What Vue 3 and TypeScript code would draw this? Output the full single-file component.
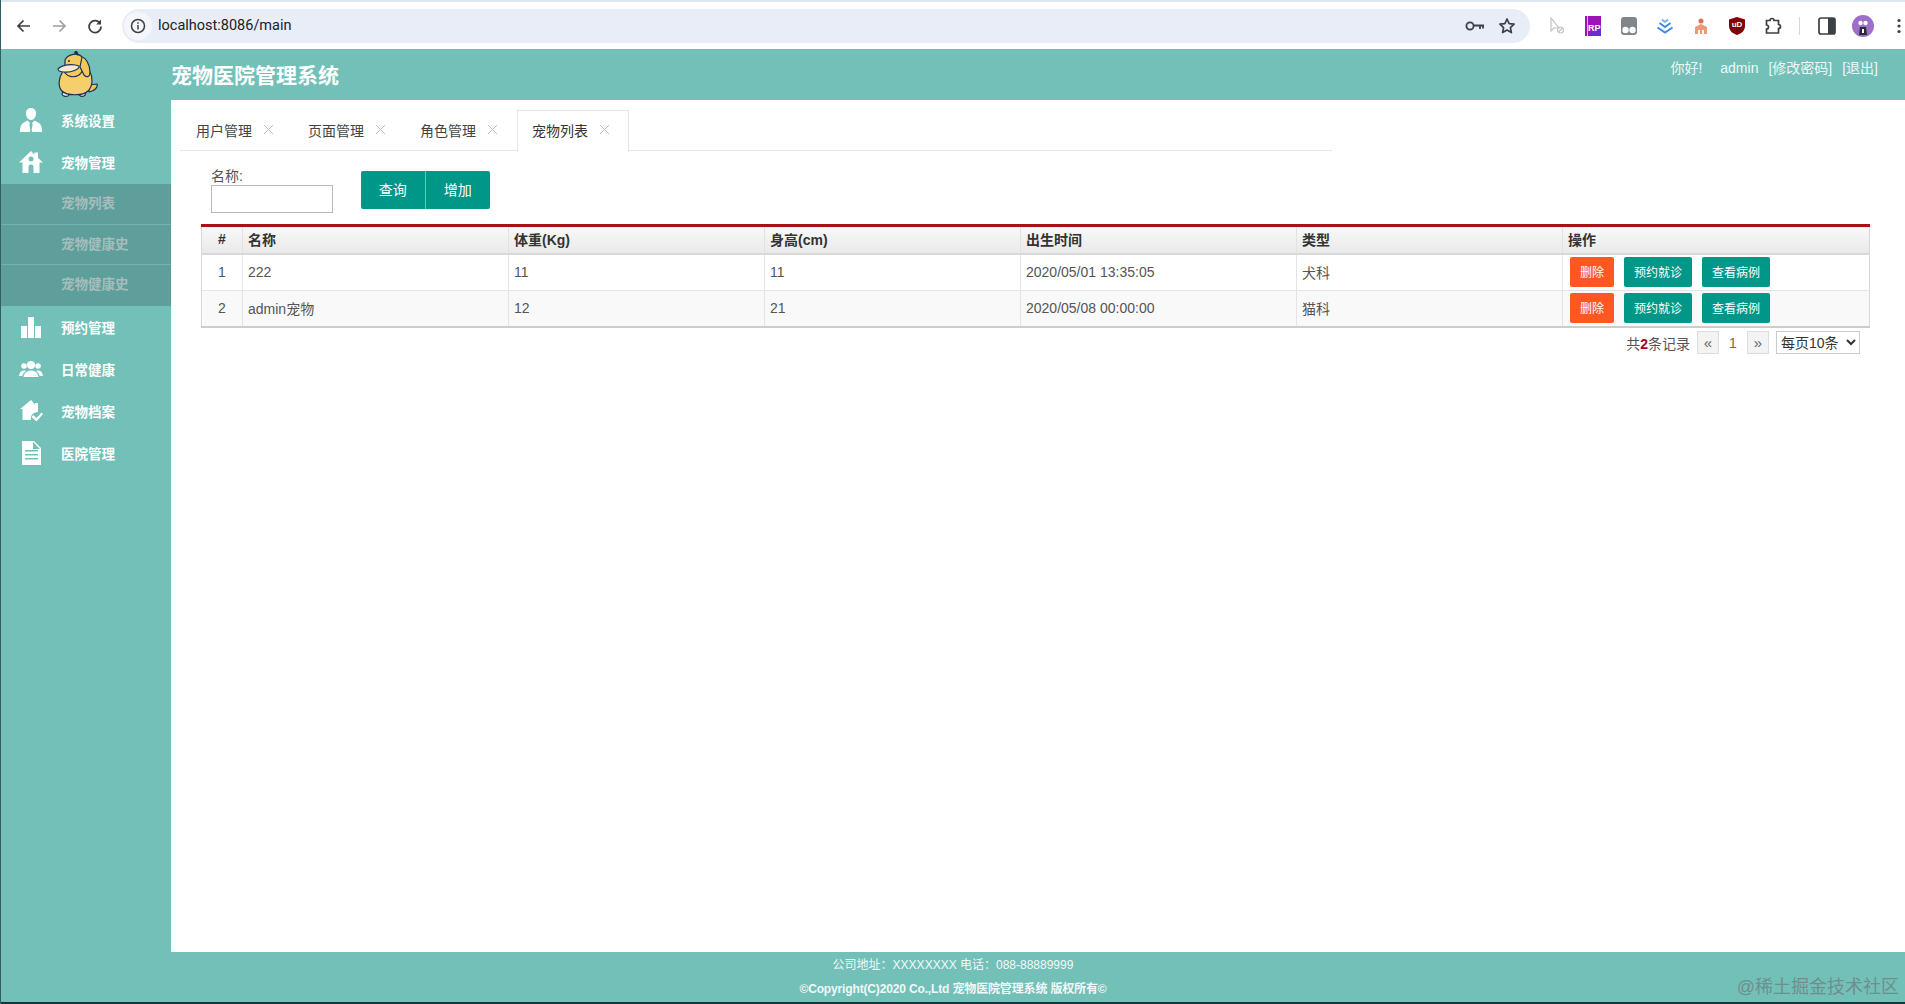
<script setup lang="ts">
interface Pet {
  id: number;
  name: string;
  weight: string;
  height: string;
  born: string;
  kind: string;
}

const tabs = ["用户管理", "页面管理", "角色管理", "宠物列表"];
const subMenu = ["宠物列表", "宠物健康史", "宠物健康史"];
const columns = ["#", "名称", "体重(Kg)", "身高(cm)", "出生时间", "类型", "操作"];
const colWidths = [41, 266, 256, 256, 276, 266, 307];

const pets: Pet[] = [
  { id: 1, name: "222", weight: "11", height: "11", born: "2020/05/01 13:35:05", kind: "犬科" },
  { id: 2, name: "admin宠物", weight: "12", height: "21", born: "2020/05/08 00:00:00", kind: "猫科" },
];
</script>

<template>
  <div class="page">
    <!-- browser chrome -->
    <div class="chrome">
      <span class="slot">
        <svg width="18" height="18" viewBox="0 0 18 18" fill="none" stroke="#3c4043" stroke-width="1.7"><path d="M15 9H3.5M8.5 3.5 3 9l5.5 5.5" /></svg>
      </span>
      <span class="slot tight">
        <svg width="18" height="18" viewBox="0 0 18 18" fill="none" stroke="#9aa0a6" stroke-width="1.7"><path d="M3 9h11.5M9.5 3.5 15 9l-5.5 5.5" /></svg>
      </span>
      <span class="slot">
        <svg width="18" height="18" viewBox="0 0 18 18" fill="none" stroke="#3c4043" stroke-width="1.7"><path d="M14.4 7A6 6 0 1 0 15 9.5" /><path d="M15 2.6V7.4H10.2" fill="#3c4043" stroke="none" /></svg>
      </span>
      <div class="address">
        <span class="site-info">
          <svg width="16" height="16" viewBox="0 0 16 16" fill="none" stroke="#3c4043" stroke-width="1.5"><circle cx="8" cy="8" r="6.5" /><path d="M8 7v4.4M8 4.2v1.6" /></svg>
        </span>
        <span class="url">localhost:8086/main</span>
        <span class="addr-slot">
          <svg width="20" height="12" viewBox="0 0 20 12" fill="none" stroke="#3c4043" stroke-width="1.8"><circle cx="5" cy="6" r="3.6" /><path d="M9 5.5h10M15 5.5v3.5M18 5.5v3" /></svg>
        </span>
        <span class="addr-slot">
          <svg width="18" height="18" viewBox="0 0 18 18" fill="none" stroke="#3c4043" stroke-width="1.7" stroke-linejoin="round"><path d="m9 2 2.1 4.6 5 .6-3.7 3.4 1 5L9 13.1l-4.4 2.5 1-5L1.900 7.200l5-.6z" /></svg>
        </span>
      </div>
      <div class="exts">
        <span class="slot">
          <svg width="16" height="18" viewBox="0 0 16 18" fill="none" stroke="#c4c4c4" stroke-width="1.2"><path d="M2 1v13l3-3h5z" /><circle cx="11.500" cy="13" r="3" /><path d="m9.500 15 4-4" /></svg>
        </span>
        <span class="slot">
          <svg width="16" height="20" viewBox="0 0 16 20"><rect width="16" height="20" fill="#9c14b8" /><rect x="2" width="1" height="20" fill="#e6b3ef" /><path d="M3 20 16 7v13z" fill="#6a2bd0" /></svg>
          <span class="rp">RP</span>
        </span>
        <span class="slot">
          <svg width="16" height="18" viewBox="0 0 16 18"><rect width="16" height="18" rx="3" fill="#80868b" /><circle cx="4.500" cy="13" r="3.200" fill="#fff" /><circle cx="11.500" cy="13" r="3.200" fill="#fff" /></svg>
        </span>
        <span class="slot">
          <svg width="18" height="16" viewBox="0 0 18 16" fill="none" stroke="#3b8be0" stroke-width="2"><path d="m6 1.500 3 2.500 3-2.500" stroke="#7ab6ef" /><path d="m3.500 5 5.500 4 5.500-4" /><path d="m1.500 9.500 7.500 5 7.500-5" /></svg>
        </span>
        <span class="slot">
          <svg width="14" height="16" viewBox="0 0 14 16"><circle cx="7" cy="3" r="2.500" fill="#e2704f" /><path d="M1 16V9l6-3 6 3v7h-3v-4H8v4H6v-4H4v4z" fill="#eb9a78" /></svg>
        </span>
        <span class="slot">
          <svg width="16" height="18" viewBox="0 0 16 18"><path d="M8 0 16 2.500V9c0 4.500-3.500 7.500-8 9-4.500-1.500-8-4.500-8-9V2.500z" fill="#800000" /></svg>
          <span class="ub">uD</span>
        </span>
        <span class="slot">
          <svg width="18" height="18" viewBox="0 0 18 18" fill="none" stroke="#3c4043" stroke-width="1.700"><path d="M2 4h3.500a2 2 0 1 1 4 0H14v4a2 2 0 1 1 0 4v4.500H2v-4a2 2 0 0 0 0-4z" transform="translate(.5 -.5)" /></svg>
        </span>
      </div>
      <span class="divider"></span>
      <span class="slot">
        <svg width="18" height="18" viewBox="0 0 18 18"><rect x="1" y="1" width="16" height="16" rx="2" fill="none" stroke="#3c4043" stroke-width="1.700" /><rect x="10" y="1" width="7" height="16" fill="#3c4043" /></svg>
      </span>
      <span class="slot">
        <svg width="22" height="22" viewBox="0 0 22 22"><circle cx="11" cy="11" r="11" fill="#9c70c9" /><circle cx="8.500" cy="8" r="2.200" fill="#fff" /><circle cx="13.500" cy="8" r="2.200" fill="#fff" /><path d="M8 12h6l1 8H7z" fill="#2b2b33" /><rect x="10" y="14" width="2" height="4" fill="#fff" /></svg>
      </span>
      <span class="slot">
        <svg width="4" height="16" viewBox="0 0 4 16" fill="#3c4043"><circle cx="2" cy="2.500" r="1.600" /><circle cx="2" cy="8" r="1.600" /><circle cx="2" cy="13.500" r="1.600" /></svg>
      </span>
    </div>

    <header class="top">
      <div class="brand">
        <svg class="duck" width="42" height="48" viewBox="0 0 42 48">
          <g stroke="#1d2f5a" stroke-width="1.200" stroke-linejoin="round">
            <path d="M6 44c0-2 3-3 5-2s3 3 1 4-6 0-6-2zM23 44c0-2 3-3 5-2s2 3 0 4-5 0-5-2z" fill="#dfe8f3" />
            <path d="M33 35 41 34c1 3-2 7-8 8z" fill="#f1c35b" />
            <path d="M7 21C2 29 2 37 6 41c5 5 21 5 26 0 5-5 5-14 2-19L26 12z" fill="#f6cf6c" />
            <path d="M9 10C12 4 22 2 26 7c4 5 2 14-3 18-5 3-11 2-14-2z" fill="#f6c95c" />
            <path d="M26 7c4 1 8 8 8 15 0 5-3 6-6 3l-4-8z" fill="#f4c75a" />
            <path d="M19 3c-1-1 1-2 2-1l1 3z" fill="#1d2f5a" />
            <path d="M2 19c4-4 14-6 21-3 1 3-8 7-15 6-3 0-6-1-6-3z" fill="#f6ead2" />
          </g>
          <circle cx="13" cy="11" r="1" fill="#1d2f5a" />
        </svg>
      </div>
      <h1 class="title">宠物医院管理系统</h1>
      <div class="user">
        <span>你好!</span>
        <span>admin</span>
        <span>[修改密码]</span>
        <span>[退出]</span>
      </div>
    </header>

    <div class="body">
      <aside class="side">
        <div class="item">
          <svg class="ico" viewBox="0 0 24 24" fill="#fff"><path d="M12 0c3.300 0 5 2.400 5 5.500S15 12 12 12 7 8.800 7 5.500 8.700 0 12 0z" /><path d="M8.500 12.500 11 15l-.7 1.500 1 5-.3 2.500H1c0-4 .8-7.500 3-9zM15.500 12.500 13 15l.7 1.500-1 5 .3 2.500h10c0-4-.8-7.500-3-9z" /></svg>
          <span>系统设置</span>
        </div>
        <div class="item">
          <svg class="ico" viewBox="0 0 24 24" fill="#fff"><path fill-rule="evenodd" d="M12 1 0 12.500h3.500V23h6v-6a2.500 2.500 0 0 1 5 0v6h6V12.500H24L19 8V2.500h-3.500v2.200zM12 6.500a2.500 2.500 0 1 1 0 5 2.500 2.500 0 0 1 0-5z" /></svg>
          <span>宠物管理</span>
        </div>
        <div class="sub">
          <div v-for="(name, i) in subMenu" :key="i" class="sub-item">{{ name }}</div>
        </div>
        <div class="item">
          <svg class="ico" viewBox="0 0 24 24" fill="#fff"><path d="M2 11h6v12H2zM9 2h6v21H9zM16 11h6v12h-6z" /></svg>
          <span>预约管理</span>
        </div>
        <div class="item">
          <svg class="ico" viewBox="0 0 24 24" fill="#fff"><circle cx="12" cy="8" r="4" /><path d="M4.500 20c.5-4 3.500-6.500 7.500-6.500s7 2.500 7.500 6.500z" /><circle cx="5" cy="9" r="2.800" /><circle cx="19" cy="9" r="2.800" /><path d="M0 19c.3-3.500 2-5.500 5-5.500.8 0 1.400.1 2 .4-2 1.300-3.300 3-3.700 5.100zM24 19c-.3-3.500-2-5.500-5-5.500-.8 0-1.400.1-2 .4 2 1.300 3.300 3 3.700 5.100z" /></svg>
          <span>日常健康</span>
        </div>
        <div class="item">
          <svg class="ico" viewBox="0 0 24 24" fill="#fff"><path d="M12 1 1 10h2.500v11H12c-1-4 2-8 7-8V4h-3v1.500z" /><path d="m12.500 18 2-2 3 3 5-5.500 1.500 1.500-6.500 7.500z" /></svg>
          <span>宠物档案</span>
        </div>
        <div class="item">
          <svg class="ico" viewBox="0 0 24 24" fill="#fff"><path fill-rule="evenodd" d="M3 0h12l7 7v17H3zM6 9v1.500h13V9zM6 13v1.500h13V13zM6 17v1.500h13V17zM14 1v7h7z" /></svg>
          <span>医院管理</span>
        </div>
      </aside>

      <main class="main">
        <div class="tabs">
          <div v-for="(tab, i) in tabs" :key="tab" class="tab" :class="{ active: i === tabs.length - 1 }">
            <span>{{ tab }}</span>
            <svg width="11" height="11" viewBox="0 0 11 11" fill="none" stroke="#bdbdbd"><path d="m1 1 9 9M10 1l-9 9" /></svg>
          </div>
        </div>

        <div class="filter">
          <label class="field">
            <span>名称:</span>
            <input type="text" />
          </label>
          <div class="btn-group">
            <button type="button" class="big-btn">查询</button>
            <button type="button" class="big-btn">增加</button>
          </div>
        </div>

        <table class="grid">
          <colgroup>
            <col v-for="(w, i) in colWidths" :key="i" :style="{ width: w + 'px' }" />
          </colgroup>
          <thead>
            <tr>
              <th v-for="(col, i) in columns" :key="col" :class="{ center: i === 0 }">{{ col }}</th>
            </tr>
          </thead>
          <tbody>
            <tr v-for="pet in pets" :key="pet.id">
              <td class="center">{{ pet.id }}</td>
              <td>{{ pet.name }}</td>
              <td>{{ pet.weight }}</td>
              <td>{{ pet.height }}</td>
              <td>{{ pet.born }}</td>
              <td>{{ pet.kind }}</td>
              <td class="ops">
                <button type="button" class="sm danger">删除</button>
                <button type="button" class="sm">预约就诊</button>
                <button type="button" class="sm">查看病例</button>
              </td>
            </tr>
          </tbody>
        </table>

        <div class="pager">
          <span>共<b>2</b>条记录</span>
          <a class="pg">«</a>
          <span class="cur">1</span>
          <a class="pg">»</a>
          <select>
            <option>每页10条</option>
          </select>
        </div>
      </main>
    </div>

    <footer class="foot">
      <p>公司地址：XXXXXXXX 电话：088-88889999</p>
      <p class="copy">©Copyright(C)2020 Co.,Ltd 宠物医院管理系统 版权所有©</p>
      <span class="mark">@稀土掘金技术社区</span>
    </footer>
    <div class="edge"></div>
  </div>
</template>

<style scoped>
.page {
  height: 1004px;
  width: 1905px;
  display: flex;
  flex-direction: column;
  border-left: 1px solid #2f5f60;
  box-sizing: border-box;
  overflow: hidden;
  background: #fff;
  font-family: "Liberation Sans", "Noto Sans CJK SC", sans-serif;
  color: #555;
}

/* chrome */
.chrome {
  height: 49px;
  flex: none;
  display: flex;
  align-items: center;
  box-sizing: border-box;
  border-top: 2px solid #dce7f4;
  padding-left: 5px;
  background: #fff;
  overflow: hidden;
}
.slot {
  position: relative;
  width: 36px;
  height: 36px;
  flex: none;
  display: flex;
  align-items: center;
  justify-content: center;
}
.slot.tight {
  margin-left: -1px;
}
.rp {
  position: absolute;
  left: 13px;
  top: 15px;
  font-size: 9px;
  font-weight: 700;
  color: #fff;
  font-family: "Liberation Sans", sans-serif;
}
.ub {
  position: absolute;
  left: 0;
  right: 0;
  top: 12px;
  text-align: center;
  font-size: 8px;
  line-height: 10px;
  font-weight: 700;
  color: #fff;
  font-family: "Liberation Sans", sans-serif;
}
.address {
  width: 1408px;
  height: 34px;
  margin-left: 9px;
  flex: none;
  display: flex;
  align-items: center;
  border-radius: 17px;
  background: #e9edf8;
  padding-right: 7px;
  box-sizing: border-box;
}
.site-info {
  width: 28px;
  height: 28px;
  margin-left: 2px;
  border-radius: 50%;
  background: #f4f6fb;
  display: flex;
  align-items: center;
  justify-content: center;
}
.url {
  margin-left: 6px;
  flex: 1;
  font-family: Roboto, "Liberation Sans", sans-serif;
  font-size: 14.500px;
  color: #202124;
}
.addr-slot {
  width: 32px;
  display: flex;
  justify-content: center;
}
.exts {
  margin-left: 9px;
  display: flex;
  flex: none;
}
.divider {
  width: 1px;
  height: 18px;
  margin: 0 9px 0 8px;
  flex: none;
  background: #d5d7da;
}

/* header */
.top {
  height: 51px;
  flex: none;
  display: flex;
  background: #72c0b7;
  color: #fff;
  position: relative;
}
.brand {
  width: 170px;
  flex: none;
  padding-left: 55px;
  box-sizing: border-box;
}
.duck {
  display: block;
  margin-top: 1px;
}
.title {
  margin: 13px 0 0;
  font-size: 21px;
  line-height: 28px;
  font-weight: 700;
}
.user {
  margin-left: auto;
  padding: 9px 27px 0 0;
  display: flex;
  gap: 10px;
  font-size: 14px;
  line-height: 20px;
  color: #f0f8f6;
}
.user span:first-child {
  margin-right: 8px;
}

/* body */
.body {
  flex: 1;
  min-height: 0;
  display: flex;
}
.side {
  width: 170px;
  flex: none;
  background: #72c0b7;
}
.item {
  height: 42px;
  display: flex;
  align-items: center;
  padding-left: 18px;
  font-size: 13.500px;
  font-weight: 700;
  color: #fff;
}
.item:first-child {
  height: 40px;
}
.item:nth-child(2) {
  height: 44px;
}
.item span {
  margin-top: -1px;
}
.ico {
  width: 24px;
  height: 24px;
  margin-right: 18px;
  flex: none;
}
.sub {
  background: #5e9f9b;
}
.sub-item {
  height: 40.700px;
  line-height: 40px;
  padding-left: 60px;
  font-size: 13.500px;
  font-weight: 700;
  color: #a6bdbb;
  box-sizing: border-box;
  border-bottom: 1px solid #77b3ae;
}
.sub-item:last-child {
  border-bottom: 0;
}

.main {
  flex: 1;
  min-width: 0;
}
.tabs {
  margin: 10px 0 0 9px;
  padding-left: 1px;
  width: 1152px;
  height: 41px;
  display: flex;
  box-sizing: border-box;
  border-bottom: 1px solid #e6e6e6;
}
.tab {
  width: 112px;
  height: 41px;
  padding: 0 0 3px 14px;
  box-sizing: border-box;
  display: flex;
  align-items: center;
  gap: 11px;
  font-size: 14px;
  color: #444;
  border: 1px solid transparent;
  border-bottom: 0;
}
.tab.active {
  border-color: #e6e6e6;
  background: #fff;
  color: #333;
  height: 42px;
  padding-bottom: 4px;
}
.filter {
  display: flex;
  margin: 20px 0 11px 40px;
}
.field {
  display: flex;
  flex-direction: column;
  font-size: 14px;
  line-height: 10px;
  color: #555;
}
.field input {
  width: 122px;
  height: 28px;
  box-sizing: border-box;
  border: 1px solid #bbb;
  outline: 0;
}
.field span {
  height: 14px;
}
.btn-group {
  display: flex;
  margin-left: 28px;
  height: 38px;
}
.big-btn {
  width: 64.500px;
  border: 0;
  background: #009688;
  color: #fff;
  font: 14px "Liberation Sans", "Noto Sans CJK SC", sans-serif;
  padding: 0 0 2px;
}
.big-btn:first-child {
  border-radius: 2px 0 0 2px;
  border-right: 1px solid #6cc2ba;
}
.big-btn:last-child {
  border-radius: 0 2px 2px 0;
}

/* table */
.grid {
  margin-left: 30px;
  width: 1668px;
  table-layout: fixed;
  border-collapse: collapse;
  border-top: 3px solid #a31515;
  border-bottom: 2px solid #ccc;
  font-size: 14px;
}
.grid th {
  height: 24px;
  padding: 0 5px 2px;
  text-align: left;
  font-size: 14px;
  font-weight: 700;
  color: #333;
  background: linear-gradient(#f8f8f8, #e9e9e9);
  border: 1px solid #e2e2e2;
  border-top: 0;
  border-bottom: 2px solid #d8d8d8;
}
.grid td {
  height: 33px;
  padding: 0 5px 2px;
  color: #555;
  border: 1px solid #e4e4e4;
  border-top: 0;
}
.grid tbody tr:last-child td {
  background: #f9f9f9;
  border-bottom: 0;
}
.grid .center {
  text-align: center;
}
.grid th:first-child,
.grid td:first-child {
  border-left: 1px solid #d8d8d8;
}
.grid th:last-child,
.grid td:last-child {
  border-right: 1px solid #d8d8d8;
}
.grid .ops {
  padding-left: 7px;
}
.sm {
  height: 30px;
  padding: 0 10px;
  border: 0;
  border-radius: 2px;
  background: #009688;
  color: #fff;
  font: 12px "Liberation Sans", "Noto Sans CJK SC", sans-serif;
  vertical-align: middle;
}
.sm + .sm {
  margin-left: 10px;
}
.sm.danger {
  background: #ff5722;
}

/* pager */
.pager {
  margin: 3px 45px 0 0;
  display: flex;
  justify-content: flex-end;
  align-items: center;
  font-size: 14px;
  color: #555;
}
.pager b {
  color: #a0002a;
}
.pg {
  width: 22px;
  height: 23px;
  box-sizing: border-box;
  display: flex;
  align-items: center;
  justify-content: center;
  border: 1px solid #ddd;
  background: #f3f3f3;
  font-size: 15px;
  color: #666;
}
.pg:first-of-type {
  margin-left: 7px;
}
.cur {
  width: 28px;
  text-align: center;
  color: #9a5a3a;
}
.pager select {
  width: 84px;
  height: 23px;
  margin-left: 7px;
  box-sizing: border-box;
  border: 1px solid #ccc;
  background: #fff;
  color: #333;
  font: 14px "Liberation Sans", "Noto Sans CJK SC", sans-serif;
}

/* footer */
.foot {
  position: relative;
  height: 50px;
  flex: none;
  background: #72c0b7;
  color: #f2f8f7;
  font-size: 12px;
  text-align: center;
}
.foot p {
  margin: 0;
  height: 24px;
  line-height: 26px;
}
.foot p.copy {
  font-weight: 700;
  line-height: 26px;
  letter-spacing: -0.150px;
}
.mark {
  position: absolute;
  right: 6px;
  top: 24px;
  font-size: 18px;
  line-height: 22px;
  color: rgba(110, 125, 125, 0.75);
}
.edge {
  height: 2px;
  flex: none;
  background: #17343a;
}
</style>

<style>
html,
body {
  margin: 0;
  background: #fff;
}
</style>
